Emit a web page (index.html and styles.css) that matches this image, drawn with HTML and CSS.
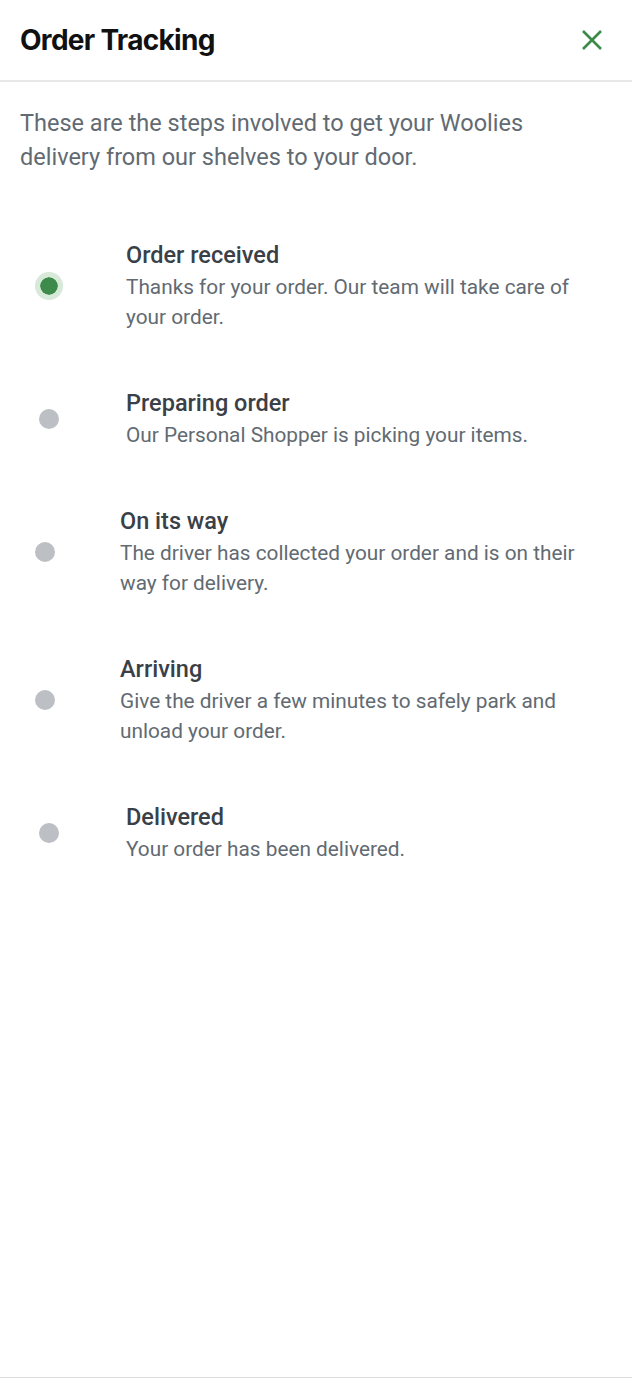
FILE: index.html
```html
<!DOCTYPE html>
<html lang="en">
<head>
<meta charset="utf-8">
<title>Order Tracking</title>
<link rel="stylesheet" href="styles.css">
</head>
<body>
<div class="page">
  <header class="header">
    <h1 class="title">Order Tracking</h1>
    <button class="close" aria-label="Close">
      <svg width="22" height="22" viewBox="0 0 22 22"><path d="M2 2 L20 20 M20 2 L2 20" stroke="#3b8a48" stroke-width="2.6" fill="none"/></svg>
    </button>
  </header>
  <main class="content">
    <p class="intro">These are the steps involved to get your Woolies delivery from our shelves to your door.</p>
    <ol class="steps">
      <li class="step">
        <span class="dot-wrap"><span class="dot dot--active"></span></span>
        <div class="step-text">
          <h2 class="step-title">Order received</h2>
          <p class="step-desc">Thanks for your order. Our team will take care of your order.</p>
        </div>
      </li>
      <li class="step">
        <span class="dot-wrap"><span class="dot"></span></span>
        <div class="step-text">
          <h2 class="step-title">Preparing order</h2>
          <p class="step-desc">Our Personal Shopper is picking your items.</p>
        </div>
      </li>
      <li class="step step--narrow">
        <span class="dot-wrap"><span class="dot"></span></span>
        <div class="step-text">
          <h2 class="step-title">On its way</h2>
          <p class="step-desc">The driver has collected your order and is on their way for delivery.</p>
        </div>
      </li>
      <li class="step step--narrow">
        <span class="dot-wrap"><span class="dot"></span></span>
        <div class="step-text">
          <h2 class="step-title">Arriving</h2>
          <p class="step-desc">Give the driver a few minutes to safely park and unload your order.</p>
        </div>
      </li>
      <li class="step">
        <span class="dot-wrap"><span class="dot"></span></span>
        <div class="step-text">
          <h2 class="step-title">Delivered</h2>
          <p class="step-desc">Your order has been delivered.</p>
        </div>
      </li>
    </ol>
  </main>
  <footer class="footer">Accessibility</footer>
</div>
</body>
</html>
```
FILE: styles.css
```css
* { box-sizing: border-box; }
html, body { margin: 0; padding: 0; background: #fff; }
body { height: 1378px; overflow: hidden; font-family: Roboto, "Liberation Sans", sans-serif; }
.page { display: flex; flex-direction: column; min-height: 1417px; }
.header {
  height: 82px;
  display: flex;
  align-items: center;
  justify-content: space-between;
  padding: 0 29px 0 20px;
  border-bottom: 2px solid #e6e8ea;
}
.title {
  margin: 0;
  font-family: Inter, "Liberation Sans", sans-serif;
  font-weight: 700;
  font-size: 28px;
  letter-spacing: -0.7px;
  color: #111;
}
.close { border: 0; background: none; padding: 0; width: 22px; height: 22px; display: flex; cursor: pointer; }
.content { flex: 1; padding: 24px 40px 0 20px; }
.intro {
  margin: 0 0 66px 0;
  font-size: 23.5px;
  line-height: 34px;
  color: #626a72;
}
.steps { list-style: none; margin: 0; padding: 0; display: flex; flex-direction: column; gap: 56px; }
.step { display: flex; align-items: center; gap: 62px; padding-left: 14px; }
.step--narrow { padding-left: 10px; gap: 60px; }
.dot-wrap { width: 30px; display: flex; justify-content: center; align-items: center; }
.dot { width: 20px; height: 20px; border-radius: 50%; background: #bcbfc3; }
.dot--active { width: 28px; height: 28px; background: #3d8b4b; border: 5px solid #d7e9d9; background-clip: padding-box; }
.step-text { flex: 1; }
.step-title { margin: 0; font-size: 23.5px; line-height: 30px; font-weight: 500; color: #3a4047; }
.step-desc { margin: 2px 0 0 0; font-size: 20.8px; line-height: 30px; color: #626a72; }
.footer {
  border-top: 1px solid #dcdcdc;
  text-align: center;
  color: #3b7a45;
  font-size: 20px;
  line-height: 16px;
  height: 40px;
}
```
